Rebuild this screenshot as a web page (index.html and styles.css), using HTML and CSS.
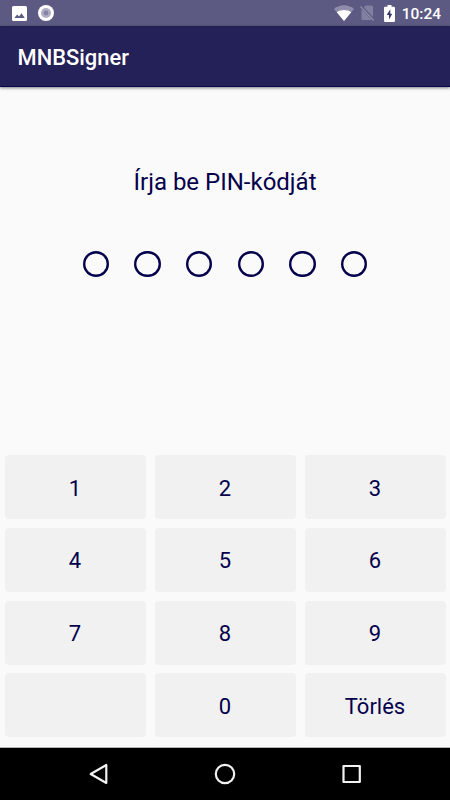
FILE: index.html
```html
<!DOCTYPE html>
<html lang="hu">
<head>
  <meta charset="UTF-8" />
  <meta name="viewport" content="width=device-width, initial-scale=1.0" />
  <title>MNBSigner</title>
  <link rel="stylesheet" href="styles.css">
</head>
<body>
  <div class="statusbar">
    <div class="notifications">
      <svg width="15" height="15" viewBox="0 0 15 15">
        <path fill="#fff" fill-rule="evenodd" d="M1.5 0h12A1.5 1.5 0 0 1 15 1.5v12a1.5 1.5 0 0 1-1.500 1.500h-12A1.500 1.500 0 0 1 0 13.500v-12A1.500 1.500 0 0 1 1.500 0zM2.300 12h10.500L9.500 7.300 7 10.500 5.200 8.500z" />
      </svg>
      <svg width="16" height="16" viewBox="0 0 16 16">
        <circle cx="8" cy="8" r="8" fill="#fff" />
        <circle cx="8" cy="8" r="5" fill="#aeadc3" />
        <circle cx="8" cy="8" r="2.400" fill="#8583a4" />
      </svg>
    </div>
    <div class="system">
      <svg class="wifi" width="20" height="16" viewBox="0 0 20 16">
        <path fill="#8f8dab" d="M0 4C6-1 14-1 20 4L10 16z" />
        <path fill="#fff" d="M2.800 7.300C7 4.100 13 4.100 17.200 7.300L10 16z" />
      </svg>
      <svg class="sim" width="15" height="16" viewBox="0 0 15 16">
        <path fill="#8280a0" d="M5.500 .5H11.500Q13 .5 13 2V12.800L3.600 2.700zM1.500 4.200L11.800 15H3Q1.500 15 1.500 13.500z" />
        <path stroke="#5c5a82" stroke-width="1.200" d="M2.500 2L14.500 14.500" />
        <path stroke="#8f8dab" stroke-width="1.200" d="M.5 1.500L13.700 15.500" />
      </svg>
      <svg class="battery" width="11" height="17" viewBox="0 0 11 17">
        <path fill="#fff" d="M3.500 0h4v1.700h2.300Q11 1.700 11 2.900V15.800Q11 17 9.800 17H1.200Q0 17 0 15.800V2.900Q0 1.700 1.200 1.700H3.500z" />
        <path fill="#37356a" d="M6.300 4.200L2.700 10H5V14.500L8.300 8.700H6.300z" />
      </svg>
      <span class="clock">10:24</span>
    </div>
  </div>
  <header class="appbar">
    <h1>MNBSigner</h1>
  </header>
  <main>
    <p class="prompt">Írja be PIN-kódját</p>
    <div class="dots">
      <span></span><span></span><span></span><span></span><span></span><span></span>
    </div>
    <div class="keypad">
      <button>1</button>
      <button>2</button>
      <button>3</button>
      <button>4</button>
      <button>5</button>
      <button>6</button>
      <button>7</button>
      <button>8</button>
      <button>9</button>
      <button></button>
      <button>0</button>
      <button>Törlés</button>
    </div>
  </main>
  <nav class="navbar">
    <svg width="22" height="22" viewBox="0 0 22 22">
      <path d="M18.300 2V20L2.700 11z" />
    </svg>
    <svg width="22" height="22" viewBox="0 0 22 22">
      <circle cx="11" cy="11" r="9.200" />
    </svg>
    <svg width="22" height="22" viewBox="0 0 22 22">
      <rect x="2.500" y="3" width="16.300" height="16" />
    </svg>
  </nav>
</body>
</html>
```
FILE: styles.css
```css
* {
  box-sizing: border-box;
}
body {
  margin: 0;
  height: 100vh;
  display: flex;
  flex-direction: column;
  overflow: hidden;
  background: #fafafa;
  color: #04004c;
  font-family: Roboto, sans-serif;
}
svg {
  display: block;
}
.statusbar {
  height: 26px;
  flex: none;
  display: flex;
  justify-content: space-between;
  padding: 0 9px 0 12px;
  background: #5c5a82;
  color: #fff;
}
.notifications, .system {
  display: flex;
  align-items: center;
}
.notifications {
  gap: 11px;
}
.sim {
  margin-left: 6px;
}
.battery {
  margin-left: 9px;
}
.clock {
  margin: 2px 0 0 7px;
  font-size: 15.5px;
  font-weight: 500;
  line-height: 18px;
}
.appbar {
  height: 61px;
  flex: none;
  display: flex;
  align-items: center;
  padding: 3px 17.5px 0;
  background: #242058;
  border-bottom: 1px solid #0b0650;
  color: #fff;
  box-shadow: 0 1px 3px rgba(0, 0, 0, 0.5);
}
h1 {
  margin: 0;
  font-size: 21.9px;
  font-weight: 500;
}
main {
  flex: 1;
  display: flex;
  flex-direction: column;
  padding: 0 4.5px 9.7px;
  border-bottom: 1px solid #b5b5b5;
}
.prompt {
  margin: 79px 0 0;
  font-size: 24px;
  line-height: 32px;
  text-align: center;
}
.dots {
  display: flex;
  justify-content: center;
  gap: 25.2px;
  margin-top: 53px;
}
.dots span {
  width: 26.4px;
  height: 26.4px;
  border-radius: 50%;
  box-shadow: inset 0 0 0 2.4px #04004c;
}
.keypad {
  display: grid;
  grid-template-columns: repeat(3, 1fr);
  grid-auto-rows: 64px;
  gap: 8.75px 9px;
  margin-top: auto;
}
button {
  padding: 2px 0 0;
  border: none;
  border-radius: 4px;
  background: #f1f1f1;
  color: inherit;
  font-family: inherit;
  font-size: 22px;
}
.navbar {
  height: 52px;
  flex: none;
  display: flex;
  align-items: center;
  justify-content: center;
  gap: 104.5px;
  background: #000;
}
.navbar svg {
  fill: none;
  stroke: #f2f2f2;
  stroke-width: 2.2;
  stroke-linejoin: round;
}
```
